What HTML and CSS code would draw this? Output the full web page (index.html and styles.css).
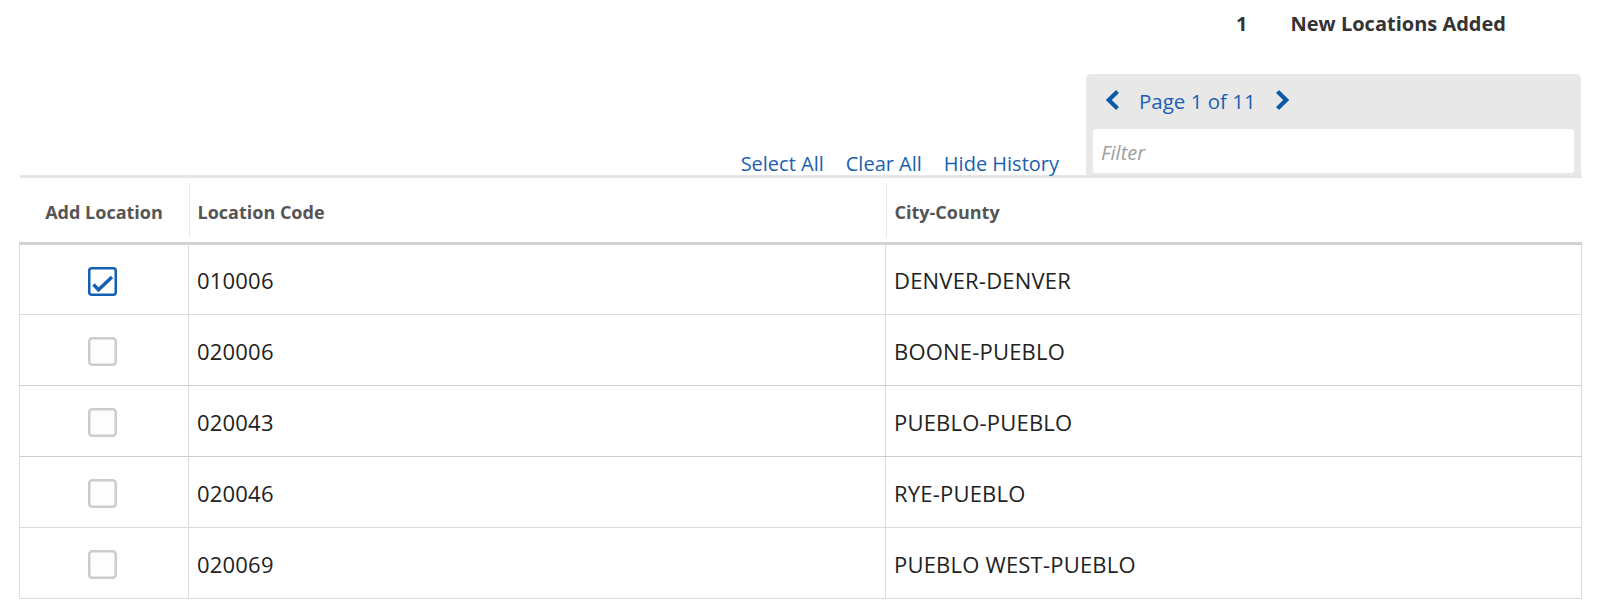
FILE: index.html
```html
<!DOCTYPE html>
<html lang="en">
<head>
<meta charset="utf-8">
<title>Locations</title>
<link rel="stylesheet" href="styles.css">
</head>
<body>
<div class="page">
  <div class="summary">
    <span class="count">1</span>
    <span class="label">New Locations Added</span>
  </div>
  <div class="toolbar">
    <div class="links">
      <a href="#">Select All</a>
      <a href="#">Clear All</a>
      <a href="#">Hide History</a>
    </div>
    <div class="panel">
      <div class="pager">
        <svg class="chev" width="15" height="22" viewBox="0 0 15 22"><polyline points="12.5,2.5 3.8,11 12.5,19.5" fill="none" stroke="#0b5aa8" stroke-width="4.2"/></svg>
        <span class="pagetext">Page 1 of 11</span>
        <svg class="chev" width="15" height="22" viewBox="0 0 15 22"><polyline points="2.5,2.5 11.2,11 2.5,19.5" fill="none" stroke="#0b5aa8" stroke-width="4.2"/></svg>
      </div>
      <div class="filter">Filter</div>
    </div>
  </div>
  <table class="grid">
    <colgroup><col class="c1"><col class="c2"><col class="c3"></colgroup>
    <thead>
      <tr>
        <th><div class="hcell first">Add Location</div></th>
        <th><div class="hcell">Location Code</div></th>
        <th><div class="hcell">City-County</div></th>
      </tr>
    </thead>
    <tbody>
      <tr>
        <td class="chk"><svg class="box" width="29" height="29" viewBox="0 0 29 29"><rect x="1.25" y="1.25" width="26.5" height="26.5" rx="2.5" fill="#fff" stroke="#1160b4" stroke-width="2.5"/><polyline points="5.5,17.5 10.5,22.8 24,10" fill="none" stroke="#1160b4" stroke-width="3.4"/></svg></td>
        <td>010006</td>
        <td>DENVER-DENVER</td>
      </tr>
      <tr>
        <td class="chk"><svg class="box" width="29" height="29" viewBox="0 0 29 29"><rect x="1.25" y="1.25" width="26.5" height="26.5" rx="3" fill="#fdfdfd" stroke="#cccccc" stroke-width="2.5"/></svg></td>
        <td>020006</td>
        <td>BOONE-PUEBLO</td>
      </tr>
      <tr>
        <td class="chk"><svg class="box" width="29" height="29" viewBox="0 0 29 29"><rect x="1.25" y="1.25" width="26.5" height="26.5" rx="3" fill="#fdfdfd" stroke="#cccccc" stroke-width="2.5"/></svg></td>
        <td>020043</td>
        <td>PUEBLO-PUEBLO</td>
      </tr>
      <tr>
        <td class="chk"><svg class="box" width="29" height="29" viewBox="0 0 29 29"><rect x="1.25" y="1.25" width="26.5" height="26.5" rx="3" fill="#fdfdfd" stroke="#cccccc" stroke-width="2.5"/></svg></td>
        <td>020046</td>
        <td>RYE-PUEBLO</td>
      </tr>
      <tr>
        <td class="chk"><svg class="box" width="29" height="29" viewBox="0 0 29 29"><rect x="1.25" y="1.25" width="26.5" height="26.5" rx="3" fill="#fdfdfd" stroke="#cccccc" stroke-width="2.5"/></svg></td>
        <td>020069</td>
        <td>PUEBLO WEST-PUEBLO</td>
      </tr>
    </tbody>
  </table>
</div>
</body>
</html>
```

FILE: styles.css
```css
* { box-sizing: border-box; }
html, body { margin: 0; padding: 0; background: #fff; }
body { font-family: "Open Sans", "Noto Sans", sans-serif; color: #222; }

.page { padding: 0 19px; }

.summary {
  height: 74px;
  display: flex;
  justify-content: flex-end;
  align-items: flex-start;
  padding-top: 9px;
  padding-right: 75px;
  font-weight: 700;
  font-size: 20px;
  line-height: 30px;
  color: #333;
}
.summary .count { margin-right: 43px; }

.toolbar {
  height: 101px;
  display: flex;
  justify-content: flex-end;
  align-items: flex-end;
  gap: 27px;
}
.links {
  display: flex;
  gap: 22px;
  font-size: 20px;
  line-height: 26px;
  margin-bottom: -2px;
}
.links a { color: #1b5fb0; text-decoration: none; }

.panel {
  width: 495px;
  height: 101px;
  background: #e8e8e8;
  border-radius: 5px 5px 0 0;
  padding: 0 7px 2px;
  display: flex;
  flex-direction: column;
}
.pager {
  height: 53px;
  display: flex;
  align-items: center;
  padding-left: 12px;
  gap: 19px;
}
.chev { display: block; margin-top: -1px; }
.pagetext { font-size: 20.5px; color: #1b5fb0; line-height: 26px; }
.filter {
  margin-top: 2px;
  height: 44px;
  background: #fff;
  border-radius: 3px;
  padding-left: 8px;
  padding-top: 3px;
  display: flex;
  align-items: center;
  font-style: italic;
  font-size: 20px;
  color: #a0a0a0;
}

.grid {
  width: 100%;
  table-layout: fixed;
  border-collapse: collapse;
  border-top: 3px solid #e6e6e6;
}
.grid col.c1 { width: 169px; }
.grid col.c2 { width: 697px; }
.grid col.c3 { width: 696px; }

.grid th {
  padding: 5px 0 4px;
  height: 64px;
  border-bottom: 3px solid #d2d2d2;
  text-align: left;
  font-weight: 700;
  font-size: 18px;
  color: #555;
}
.hcell {
  height: 55px;
  display: flex;
  align-items: center;
  padding-left: 8px;
  padding-top: 3px;
  border-left: 1px solid #e8e8e8;
}
.hcell.first { border-left: none; justify-content: center; padding-left: 0; }

.grid td {
  height: 71px;
  padding: 1px 0 0 8px;
  border: 1px solid #dcdcdc;
  border-top: none;
  font-size: 22px;
  letter-spacing: 0.2px;
  color: #222;
  white-space: nowrap;
}
.grid tbody tr:nth-child(2) td,
.grid tbody tr:nth-child(3) td { border-bottom-color: #cfcfcf; }
.grid td.chk {
  padding: 0 3px 0 0;
  text-align: center;
}
.box { display: inline-block; vertical-align: middle; margin-top: -1px; }
```
